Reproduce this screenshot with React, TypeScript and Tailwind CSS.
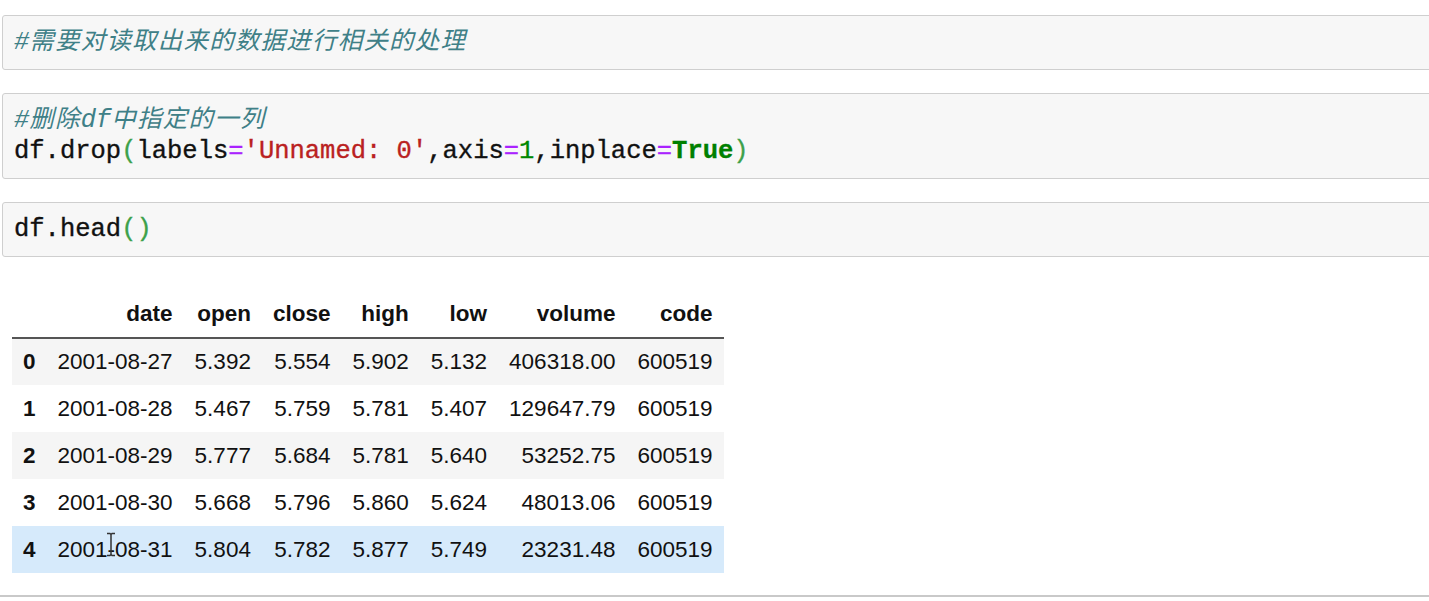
const rows = [
  ['0', '2001-08-27', '5.392', '5.554', '5.902', '5.132', '406318.00', '600519'],
  ['1', '2001-08-28', '5.467', '5.759', '5.781', '5.407', '129647.79', '600519'],
  ['2', '2001-08-29', '5.777', '5.684', '5.781', '5.640', '53252.75', '600519'],
  ['3', '2001-08-30', '5.668', '5.796', '5.860', '5.624', '48013.06', '600519'],
  ['4', '2001-08-31', '5.804', '5.782', '5.877', '5.749', '23231.48', '600519'],
]

const cols = ['date', 'open', 'close', 'high', 'low', 'volume', 'code']

const mono = "font-['Liberation_Mono','Noto_Sans_CJK_SC',monospace]"

function Cell({ children }: { children: React.ReactNode }) {
  return (
    <div className={`ml-[2px] -mr-[12px] rounded-[3px] border border-[#cfcfcf] bg-[#f7f7f7] px-[11px] py-[11px] text-[25.5px] leading-[31px] text-[#111] [-webkit-text-stroke:0.35px] ${mono}`}>
      {children}
    </div>
  )
}

// комментарий: CJK чуть разрежен, как в оригинале
function Comment({ parts }: { parts: { t: string; cjk?: boolean }[] }) {
  return (
    <div className="italic text-[#3f8087] [-webkit-text-stroke:0px]">
      {parts.map((p, i) => (
        <span key={i} className={p.cjk ? 'text-[24.5px] tracking-[1.2px]' : ''}>{p.t}</span>
      ))}
    </div>
  )
}

// I-образный курсор поверх строки 4
function IBeam() {
  return (
    <svg className="absolute left-[59px] top-[6px]" width="10" height="25" viewBox="0 0 10 25">
      <path d="M1 1.5h3l1 1 1-1h3M5 2.5v20M1 23.5h3l1-1 1 1h3" fill="none" stroke="#333" strokeWidth="1.5" />
    </svg>
  )
}

export default function App() {
  return (
    <div className="h-[601px] w-full overflow-hidden bg-white pt-[15px]">
      <div className="flex flex-col gap-[23px]">
        <Cell>
          <Comment parts={[{ t: '#' }, { t: '需要对读取出来的数据进行相关的处理', cjk: true }]} />
        </Cell>

        <Cell>
          <Comment parts={[{ t: '#' }, { t: '删除', cjk: true }, { t: 'df' }, { t: '中指定的一列', cjk: true }]} />
          <div className="whitespace-pre">
            df.drop<span className="text-[#3da14a]">(</span>labels<span className="text-[#aa22ff]">=</span>
            <span className="text-[#ba2121]">'Unnamed: 0'</span>,axis<span className="text-[#aa22ff]">=</span>
            <span className="text-[#008800]">1</span>,inplace<span className="text-[#aa22ff]">=</span>
            <span className="font-bold text-[#008000]">True</span>
            <span className="text-[#3da14a]">)</span>
          </div>
        </Cell>

        <Cell>
          <div>
            df.head<span className="text-[#3da14a]">()</span>
          </div>
        </Cell>
      </div>

      <table className="ml-[12px] mt-[34px] border-collapse font-['Liberation_Sans',Arial,sans-serif] text-[22.5px] text-[#111]">
        <thead>
          <tr className="h-[47px] border-b-2 border-[#555]">
            <th className="px-[11px]"></th>
            {cols.map((c) => (
              <th key={c} className="px-[11px] text-right font-bold">{c}</th>
            ))}
          </tr>
        </thead>
        <tbody>
          {rows.map((r, i) => (
            <tr
              key={r[0]}
              className={`h-[47px] ${i === 4 ? 'bg-[#d6eafb]' : i % 2 === 0 ? 'bg-[#f5f5f5]' : 'bg-white'}`}
            >
              <th className="px-[11px] text-left font-bold">{r[0]}</th>
              {r.slice(1).map((v, j) => (
                <td key={j} className={`px-[11px] text-right ${i === 4 && j === 0 ? 'relative' : ''}`}>
                  {v}
                  {i === 4 && j === 0 && <IBeam />}
                </td>
              ))}
            </tr>
          ))}
        </tbody>
      </table>

      <div className="mt-[22px] h-[2px] w-full bg-[#c9c9c9]" />
    </div>
  )
}
